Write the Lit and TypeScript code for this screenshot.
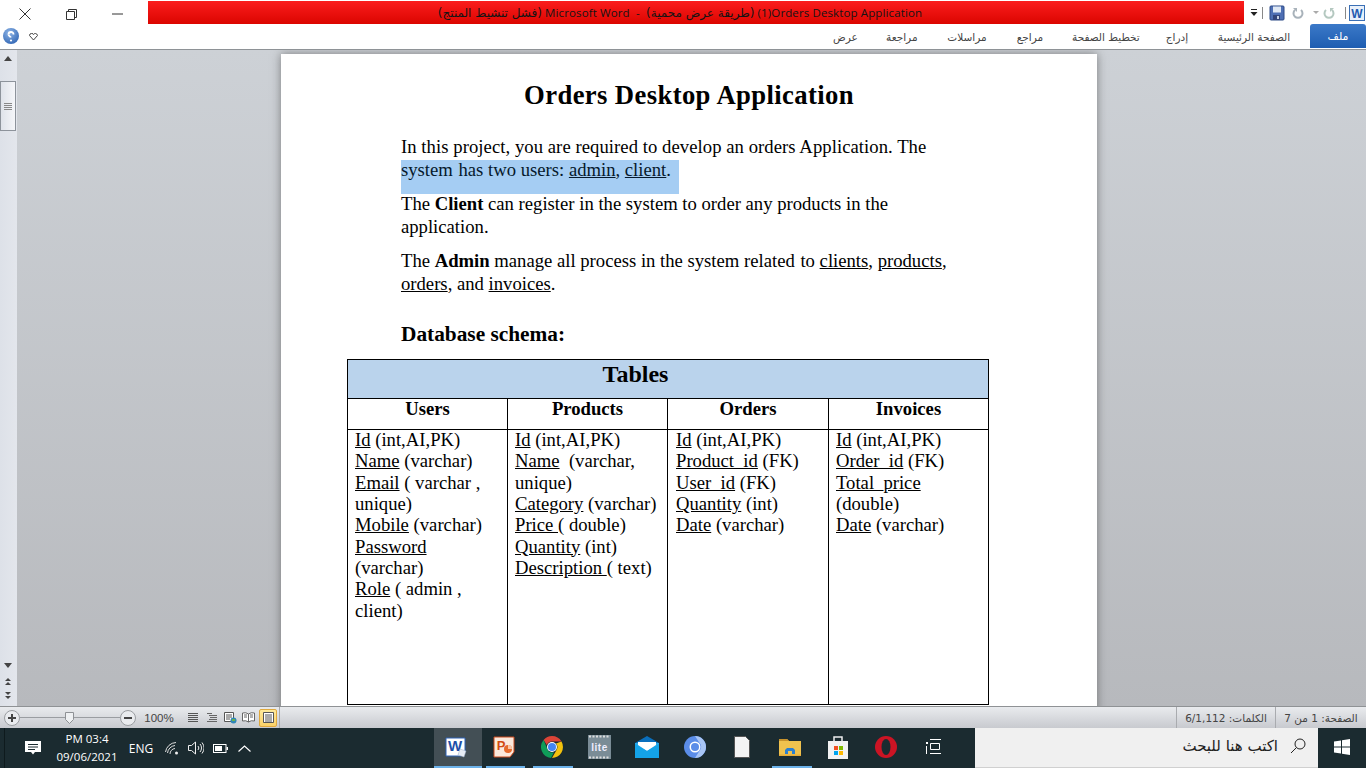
import { LitElement, html, css } from "lit";
import { customElement } from "lit/decorators.js";

const wordIcon = html`<svg width="22" height="22" viewBox="0 0 22 22"><path d="M1 2h19v14l-4 4H1z" fill="#fff" stroke="#2f62b5"/><text x="10" y="15" text-anchor="middle" font-family="Liberation Sans" font-weight="700" font-size="15" fill="#1d4fa8">W</text><path d="M15 13l6 2-2 6-6-2z" fill="#e8edf5" stroke="#9fb0c8" stroke-width=".5"/></svg>`;

@customElement("app-root")
export class AppRoot extends LitElement {
  static styles = css`
    :host { display: block; width: 1366px; height: 768px; overflow: hidden; background: #fff; font-family: "Liberation Sans", "DejaVu Sans", sans-serif; }
    .app { display: flex; flex-direction: column; height: 768px; }

    .titlebar { height: 24px; display: flex; align-items: flex-start; background: #fff; flex: none; }
    .winctl { width: 148px; height: 24px; display: flex; flex: none; }
    .winctl div { display: flex; align-items: center; justify-content: center; height: 28px; }
    .c1 { width: 50px; } .c2 { width: 42px; } .c3 { width: 50px; }
    .redbar { margin-top: 1px; width: 1096px; height: 23px; background: linear-gradient(#fb1d1d, #db0500); display: flex; align-items: center; justify-content: center; font-size: 12px; color: #141414; padding-right: 32px; box-sizing: border-box; white-space: pre; flex: none; }
    .redbar .lt { font-family: "Open Sans", sans-serif; font-size: 11.5px; letter-spacing: .12px; }
    .redbar .ar { font-family: "DejaVu Sans", sans-serif; font-size: 12px; }
    .qat { flex: 1; display: flex; align-items: center; height: 25px; padding-left: 6px; }
    .qat .sep { width: 1px; height: 12px; background: #888; flex: none; }
    .qat svg { flex: none; }
    .q-drop { margin-right: 3px; } .q-save { margin-left: 6px; } .q-undo { margin-left: 7px; } .q-arr { margin-left: 9px; } .q-redo { margin-left: 4px; } .q-sep2 { margin-left: 10px; } .q-word { margin-left: 3px; }

    .ribbon { height: 25px; flex: none; display: flex; align-items: stretch; background: #fff; border-bottom: 1px solid #8e9296; position: relative; }
    .rleft { display: flex; align-items: center; width: 44px; padding-left: 3px; gap: 10px; box-sizing: border-box; padding-top: 0; padding-bottom: 2px; }
    .heart { margin-top: 2px; }
    .tabs { flex: 1; display: flex; justify-content: flex-end; align-items: center; font-family: "DejaVu Sans", sans-serif; font-size: 10.5px; color: #444; padding-top: 1px; }
    .tabs span { display: block; white-space: nowrap; text-align: center; }
    .t1 { width: 24px; margin-right: 29px; } .t2 { width: 28px; margin-right: 32px; } .t3 { width: 42px; margin-right: 28px; } .t4 { width: 28px; margin-right: 28px; } .t5 { width: 66px; margin-right: 26px; } .t6 { width: 26px; margin-right: 26px; } .t7 { width: 76px; margin-right: 18px; }
    .file { width: 56px; height: 24px; background: linear-gradient(#3b79c8, #1e5db1); color: #fff; font-family: "DejaVu Sans", sans-serif; font-size: 11px; display: flex; align-items: center; justify-content: center; border-radius: 3px 3px 0 0; flex: none; padding-top: 1px; box-sizing: border-box; }

    .main { flex: 1; min-height: 0; display: flex; background: linear-gradient(#cdd1d6, #b7b9bd); overflow: hidden; }
    .sb { width: 17px; flex: none; background: linear-gradient(90deg, #dde1e8, #e3e6ec); display: flex; flex-direction: column; align-items: flex-start; }
    .arrow { width: 0; height: 0; border-left: 4px solid transparent; border-right: 4px solid transparent; margin-left: 4px; }
    .up { border-bottom: 5px solid #444; margin-top: 6px; }
    .thumb { width: 16px; height: 50px; margin-top: 20px; box-sizing: border-box; border: 1px solid #8d939b; background: linear-gradient(90deg, #dfe3ea, #f5f6f9); display: flex; flex-direction: column; gap: 1px; align-items: center; justify-content: center; }
    .thumb i { display: block; width: 8px; height: 1px; background: #888; }
    .sbspace { flex: 1; }
    .down { border-top: 5px solid #444; margin-bottom: 10px; }
    .dbl { display: flex; flex-direction: column; gap: 1px; align-items: center; margin-bottom: 7px; margin-left: 5px; width: 6px; }
    .dbl i { display: block; width: 0; height: 0; border-left: 3px solid transparent; border-right: 3px solid transparent; }
    .dbl .u { border-bottom: 3px solid #444; } .dbl .d { border-top: 3px solid #444; }

    .canvas { flex: 1; min-width: 0; padding: 4px 269px 0 264px; }
    .page { background: #fff; height: 700px; box-shadow: 0 0 9px rgba(80, 80, 80, .65); box-sizing: border-box; padding-top: 26px; font-family: "Liberation Serif", serif; color: #000; font-size: 18.67px; line-height: 23px; }
    .h1 { text-align: center; font-weight: 700; font-size: 26.67px; letter-spacing: .38px; line-height: 30px; margin-bottom: 25px; }
    .body { padding-left: 120px; }
    .line { white-space: pre; }
    .first { letter-spacing: .056px; }
    .gap { margin-left: 1px; }
    .sel { width: 278px; height: 34px; background: #a5cdf3; margin: 2px 0 -2px; color: #06192c; line-height: 20px; }
    .p2 { margin-top: 11px; }
    .h2 { font-weight: 700; font-size: 21.33px; margin-top: 27px; line-height: 24px; }
    .table { display: grid; grid-template-columns: 160px 160px 161px 159px; margin: 13px 0 0 66px; width: 642px; box-sizing: border-box; border: 1px solid #000; height: 346px; grid-template-rows: 39px 31px 1fr; }
    .th { grid-column: 1 / -1; background: #bad3ec; text-align: center; font-weight: 700; font-size: 24px; line-height: 28px; border-bottom: 1px solid #000; padding-right: 65px; box-sizing: border-box; }
    .hd { text-align: center; font-weight: 700; line-height: 20px; border-bottom: 1px solid #000; border-right: 1px solid #000; }
    .cell { margin-top: -1px; padding: 0 0 0 7px; line-height: 21.33px; border-right: 1px solid #000; }
    .c3col { padding-left: 8px; }
    .hd:nth-child(5), .cell:last-child { border-right: 0; }

    .status { height: 22px; flex: none; background: linear-gradient(#e9ebee, #c8cacf); border-top: 1px solid #8f9295; display: flex; align-items: center; box-sizing: border-box; color: #444; font-size: 11px; }
    .zoomgrp { display: flex; align-items: center; width: 280px; flex: none; padding-left: 4px; box-sizing: border-box; height: 100%; border-right: 1px solid #aaa; }
    .slider { position: relative; width: 100px; height: 16px; display: flex; align-items: center; flex: none; }
    .slider b { display: block; height: 1px; width: 100%; background: #9a9da1; }
    .knob { position: absolute; left: 45px; top: 2px; }
    .pct { width: 46px; text-align: center; flex: none; font-size: 11.5px; }
    .views { display: flex; align-items: center; gap: 2.5px; margin-left: 3px; }
    .vb { width: 16px; height: 16px; display: flex; align-items: center; justify-content: center; flex: none; }
    .vb.on { background: linear-gradient(#fde99b, #fbd268); border: 1px solid #e0a93e; border-radius: 2px; width: 18px; height: 18px; box-sizing: border-box; }
    .sgrow { flex: 1; }
    .stat { height: 100%; display: flex; align-items: center; border-left: 1px solid #a9abaf; font-family: "DejaVu Sans", sans-serif; font-size: 10.5px; white-space: nowrap; box-sizing: border-box; justify-content: center; }
    .s-words { width: 99px; } .s-page { width: 91px; }

    .taskbar { height: 40px; flex: none; background: #1b2b30; display: flex; align-items: stretch; color: #fff; }
    .tray { width: 434px; flex: none; display: flex; align-items: center; padding-left: 25px; box-sizing: border-box; background: linear-gradient(90deg, transparent 4px, #0e1a1d 4px, #0e1a1d 5px, transparent 5px); }
    .clock { width: 78px; margin-left: 7px; text-align: center; font-family: "Open Sans", "Liberation Sans", sans-serif; font-size: 11.5px; line-height: 18px; white-space: nowrap; }
    .eng { width: 34px; text-align: center; font-family: "Open Sans", sans-serif; font-size: 12px; margin-left: -2px; }
    .tricons { display: flex; align-items: center; gap: 9px; margin-left: 7px; }
    .chev { margin-left: 1px; }
    .apps { display: flex; width: 541px; flex: none; }
    .app-i { position: relative; width: 47.7px; display: flex; align-items: center; justify-content: center; padding: 0 3px 3px 0; box-sizing: border-box; flex: none; }
    .app-i.act { background: #434f55; }
    .ul { position: absolute; bottom: 0; height: 2px; left: 4px; right: 4px; background: #6cb2ea; }
    .act .ul { left: 0; right: 0; }
    .search { flex: 1; background: #f0f0f0; border-bottom: 1px solid #d0d0d0; display: flex; align-items: center; justify-content: flex-end; color: #222; font-family: "DejaVu Sans", sans-serif; font-size: 15px; gap: 12px; padding: 0 12px 3px 0; box-sizing: border-box; }
    .start { width: 48px; flex: none; display: flex; align-items: center; justify-content: center; padding-bottom: 2px; }
  `;

  private cell(lines: unknown[], cls = "") {
    return html`<div class="cell ${cls}">${lines.map((l) => html`<div class="line">${l}</div>`)}</div>`;
  }

  render() {
    return html`<div class="app">
      <div class="titlebar">
        <div class="winctl">
          <div class="c1"><svg width="12" height="12" viewBox="0 0 12 12"><path d="M.5.5l11 11M11.500.5l-11 11" stroke="#333" fill="none"/></svg></div>
          <div class="c2"><svg width="11" height="11" viewBox="0 0 11 11"><path d="M2.500 2.500V.5h8v8h-2M.5 2.500h8v8h-8z" stroke="#333" fill="none"/></svg></div>
          <div class="c3"><svg width="11" height="2" viewBox="0 0 11 2"><path d="M0 1h11" stroke="#333"/></svg></div>
        </div>
        <div class="redbar"><span class="ar" dir="rtl">(فشل تنشيط المنتج)</span><span class="lt"> Microsoft Word  -  </span><span class="ar" dir="rtl">(طريقة عرض محمية)</span><span class="lt"> (1)Orders Desktop Application</span></div>
        <div class="qat">
          <svg class="q-drop" width="9" height="10" viewBox="0 0 9 10"><path d="M1 1.500h6" stroke="#222"/><path d="M.5 4h7L4 8z" fill="#222"/></svg>
          <div class="sep"></div>
          <svg class="q-save" width="16" height="16" viewBox="0 0 16 16"><rect x="1" y="1" width="14" height="14" rx="1" fill="#4e6fb4" stroke="#2d4a86"/><rect x="4" y="1.500" width="8" height="6" fill="#dfe8f4"/><rect x="4" y="10" width="7" height="5" fill="#33457a"/><rect x="8" y="11" width="2" height="3" fill="#c5d0e3"/></svg>
          <svg class="q-undo" width="12" height="12" viewBox="0 0 12 12"><path d="M3 3a4.500 4.500 0 1 0 6 0" stroke="#a8b2ba" stroke-width="2" fill="none"/><path d="M1 1h4v4z" fill="#a8b2ba"/></svg>
          <svg class="q-arr" width="6" height="4" viewBox="0 0 6 4"><path d="M0 0h6L3 3z" fill="#aaa"/></svg>
          <svg class="q-redo" width="12" height="12" viewBox="0 0 12 12"><g transform="matrix(-1 0 0 1 12 0)"><path d="M3 3a4.500 4.500 0 1 0 6 0" stroke="#b4c8c0" stroke-width="2" fill="none"/><path d="M1 1h4v4z" fill="#b4c8c0"/></g></svg>
          <div class="sep q-sep2"></div>
          <svg class="q-word" width="16" height="16" viewBox="0 0 16 16"><rect x=".5" y=".5" width="15" height="15" fill="#e8f0fa" stroke="#3a6fb5"/><text x="8" y="13" text-anchor="middle" font-family="Liberation Sans" font-weight="700" font-size="12" fill="#1f5bb0">W</text></svg>
        </div>
      </div>

      <div class="ribbon">
        <div class="rleft">
          <svg width="16" height="16" viewBox="0 0 16 16"><defs><radialGradient id="hlp" cx=".4" cy=".3" r=".8"><stop offset="0" stop-color="#8db4e6"/><stop offset="1" stop-color="#2c62b2"/></radialGradient></defs><circle cx="8" cy="8" r="8" fill="url(#hlp)"/><path d="M10.500 6.500a2.500 2.500 0 1 0 -5 0" stroke="#fff" stroke-width="1.800" fill="none"/><path d="M5.500 6.500c0 1.500 2 2 2.300 3" stroke="#fff" stroke-width="1.800" fill="none"/><circle cx="8" cy="12.500" r="1.100" fill="#fff"/></svg>
          <svg class="heart" width="9" height="8" viewBox="0 0 9 8"><path d="M.5 2.500Q.5.500 2.500.500T4.500 1.500Q5 .5 6.500.5t2 2L4.500 7z" fill="none" stroke="#444"/></svg>
        </div>
        <div class="tabs">
          <span class="t1">عرض</span><span class="t2">مراجعة</span><span class="t3">مراسلات</span><span class="t4">مراجع</span><span class="t5">تخطيط الصفحة</span><span class="t6">إدراج</span><span class="t7">الصفحة الرئيسية</span>
        </div>
        <div class="file">ملف</div>
      </div>

      <div class="main">
        <div class="sb">
          <div class="arrow up"></div>
          <div class="thumb"><i></i><i></i><i></i><i></i></div>
          <div class="sbspace"></div>
          <div class="arrow down"></div>
          <div class="dbl"><i class="u"></i><i class="u"></i></div>
          <div class="dbl"><i class="d"></i><i class="d"></i></div>
        </div>
        <div class="canvas">
          <div class="page">
            <div class="h1">Orders Desktop Application</div>
            <div class="body">
              <div class="line first">In this project, you are required to develop an orders Application. The</div>
              <div class="sel"><div class="line">system <span class="gap"></span>has two users: <u>admin</u>, <u>client</u>.</div></div>
              <div class="line">The <b>Client</b> can register in the system to order any products in the</div>
              <div class="line">application.</div>
              <div class="line p2">The <b>Admin</b> manage all process in the system related <span class="gap"></span>to <u>clients</u>, <u>products</u>,</div>
              <div class="line"><u>orders</u>, and <u>invoices</u>.</div>
              <div class="line h2">Database schema:</div>
            </div>
            <div class="table">
              <div class="th">Tables</div>
              <div class="hd">Users</div><div class="hd">Products</div><div class="hd">Orders</div><div class="hd">Invoices</div>
              ${this.cell([
                html`<u>Id</u> (int,AI,PK)`, html`<u>Name</u> (varchar)`, html`<u>Email</u> ( varchar ,`, html`unique)`,
                html`<u>Mobile</u> (varchar)`, html`<u>Password</u>`, html`(varchar)`, html`<u>Role</u> ( admin ,`, html`client)`,
              ])}
              ${this.cell([
                html`<u>Id</u> (int,AI,PK)`, html`<u>Name</u>  (varchar,`, html`unique)`, html`<u>Category</u> (varchar)`,
                html`<u>Price </u>( double)`, html`<u>Quantity</u> (int)`, html`<u>Description </u>( text)`,
              ])}
              ${this.cell([
                html`<u>Id</u> (int,AI,PK)`, html`<u>Product_id</u> (FK)`, html`<u>User_id</u> (FK)`, html`<u>Quantity</u> (int)`, html`<u>Date</u> (varchar)`,
              ], "c3col")}
              ${this.cell([
                html`<u>Id</u> (int,AI,PK)`, html`<u>Order_id</u> (FK)`, html`<u>Total_price</u>`, html`(double)`, html`<u>Date</u> (varchar)`,
              ])}
            </div>
          </div>
        </div>
      </div>

      <div class="status">
        <div class="zoomgrp">
          <svg width="16" height="16" viewBox="0 0 16 16"><circle cx="8" cy="8" r="7.500" fill="#e9ebee" stroke="#9a9da1"/><path d="M4 8h8M8 4v8" stroke="#444" stroke-width="2"/></svg>
          <div class="slider"><b></b><svg class="knob" width="10" height="12" viewBox="0 0 10 12"><path d="M.5.5h8v7l-4 4-4-4z" fill="#eef0f2" stroke="#8e9195"/></svg></div>
          <svg width="16" height="16" viewBox="0 0 16 16"><circle cx="8" cy="8" r="7.500" fill="#e9ebee" stroke="#9a9da1"/><path d="M4 8h8" stroke="#444" stroke-width="2"/></svg>
          <div class="pct">100%</div>
          <div class="views">
            <div class="vb"><svg width="10" height="9" viewBox="0 0 10 9"><path d="M0 .5h10M0 2.500h10M0 4.500h10M0 6.500h10M0 8.500h10" stroke="#555"/></svg></div>
            <div class="vb"><svg width="10" height="9" viewBox="0 0 10 9"><path d="M0 .5h5M2 2.500h8M3 4.500h7M2 6.500h8M0 8.500h10" stroke="#666"/></svg></div>
            <div class="vb"><svg width="13" height="12" viewBox="0 0 13 12"><path d="M.5.500h9v9h-9zM2 3h6M2 5h6M2 7h4" stroke="#555" fill="#fff"/><circle cx="9.500" cy="8.500" r="3" fill="#2e86b8"/><path d="M8 8h3" stroke="#6cb04e" stroke-width="2"/></svg></div>
            <div class="vb"><svg width="13" height="11" viewBox="0 0 13 11"><path d="M6.500 2Q4 0 .5 1v8Q4 8 6.500 10 9 8 12.500 9V1Q9 0 6.500 2zM6.500 2v8M2 3h3M2 5h3M8 3h3M8 5h3" stroke="#666" fill="#fff"/></svg></div>
            <div class="vb on"><svg width="11" height="11" viewBox="0 0 11 11"><path d="M.5.500h10v10H.5z" fill="#fff" stroke="#555"/><path d="M2 3h7M2 5h7M2 7h7M2 9h7" stroke="#555"/></svg></div>
          </div>
        </div>
        <div class="sgrow"></div>
        <div class="stat s-words"><span dir="rtl">الكلمات: 6/1,112</span></div>
        <div class="stat s-page"><span dir="rtl">الصفحة: 1 من 7</span></div>
      </div>

      <div class="taskbar">
        <div class="tray">
          <svg width="16" height="16" viewBox="0 0 16 16"><path d="M0 1h16v11H10l-2 2.500L6 12H0z" fill="#fff"/><path d="M3 4.500h10M3 7h10M3 9.500h7" stroke="#1b2b30"/></svg>
          <div class="clock"><div>PM 03:4</div><div>09/06/2021</div></div>
          <div class="eng">ENG</div>
          <div class="tricons">
            <svg width="14" height="14" viewBox="0 0 14 14" fill="none" stroke="#ddd"><path d="M.5 11A11 11 0 0 1 11 1.500M2.500 12A8.500 8.500 0 0 1 10 4.500M5 13a5.500 5.500 0 0 1 5-5.500"/><circle cx="11.500" cy="12" r="1.500" fill="#eee" stroke="none"/></svg>
            <svg width="16" height="14" viewBox="0 0 16 14" fill="none" stroke="#eee"><path d="M.5 4.500h3l4-3.500v12l-4-3.500h-3z"/><path d="M10 5a3 3 0 0 1 0 4M12 3a6 6 0 0 1 0 8M14 1.500a9 9 0 0 1 0 11"/></svg>
            <svg width="15" height="9" viewBox="0 0 15 9"><rect x=".5" y=".5" width="12.500" height="8" fill="none" stroke="#fff"/><rect x="2" y="2" width="7" height="5" fill="#fff"/><rect x="13.500" y="3" width="1.500" height="3" fill="#fff"/></svg>
            <svg class="chev" width="13" height="7" viewBox="0 0 13 7"><path d="M.5 6.500l6-5.500 6 5.500" stroke="#fff" fill="none" stroke-width="1.200"/></svg>
          </div>
        </div>
        <div class="apps">
          <div class="app-i act">${wordIcon}<div class="ul"></div></div>
          <div class="app-i"><svg width="22" height="22" viewBox="0 0 22 22"><path d="M1 1h20v15l-4 5H1z" fill="#fbe9dc" stroke="#c8491b"/><text x="8" y="14" text-anchor="middle" font-family="Liberation Sans" font-weight="700" font-size="13" fill="#d24a10">P</text><circle cx="15" cy="13" r="4" fill="#e66a2c"/><path d="M15 13V9a4 4 0 0 1 4 4z" fill="#f9c9a9"/></svg><div class="ul"></div></div>
          <div class="app-i"><svg width="22" height="22" viewBox="0 0 22 22"><path d="M11 0a11 11 0 0 1 9.500 5.500H11a5.500 5.500 0 0 0-5.200 3.600L2.600 4A11 11 0 0 1 11 0z" fill="#db4437"/><path d="M20.500 5.500A11 11 0 0 1 11 22l4.700-8.200A5.500 5.500 0 0 0 15 7.500z" fill="#f4c20d"/><path d="M2.600 4L7.200 15A5.500 5.500 0 0 0 13 16.200L10 22A11 11 0 0 1 2.600 4z" fill="#0f9d58"/><circle cx="11" cy="11" r="5" fill="#fff"/><circle cx="11" cy="11" r="4" fill="#4285f4"/></svg><div class="ul"></div></div>
          <div class="app-i"><svg width="23" height="24" viewBox="0 0 23 24"><rect width="23" height="24" fill="#7a8c96"/><path d="M1 1.500h21M1 22.500h21" stroke="#ddd" stroke-width="2" stroke-dasharray="2 1.500"/><text x="11.500" y="16" text-anchor="middle" font-family="Liberation Sans" font-weight="700" font-size="10" letter-spacing=".5" fill="#eef">lite</text></svg></div>
          <div class="app-i"><svg width="24" height="22" viewBox="0 0 24 22"><path d="M12 0l12 7v15H0V7z" fill="#0a6fbd"/><path d="M0 7h24v15H0z" fill="#28a8ea"/><path d="M3 6h18v3l-9 6-9-6z" fill="#fff"/><path d="M0 22V8l12 7 12-7v14z" fill="#14a3e8"/></svg></div>
          <div class="app-i"><svg width="22" height="22" viewBox="0 0 22 22"><circle cx="11" cy="11" r="11" fill="#5b8de8"/><path d="M11 0a11 11 0 0 1 0 22l5-8a5 5 0 0 0-.5-7z" fill="#a8c5f5"/><circle cx="11" cy="11" r="5.500" fill="#fff"/><circle cx="11" cy="11" r="4" fill="#5b8de8"/></svg></div>
          <div class="app-i"><svg width="16" height="22" viewBox="0 0 16 22"><path d="M.5.500h11l4 4v17H.5z" fill="#f4f4f4" stroke="#555"/></svg></div>
          <div class="app-i"><svg width="22" height="18" viewBox="0 0 22 18"><path d="M0 1h8l2 2h12v15H0z" fill="#f0c24e"/><path d="M0 1h8l2 2H0z" fill="#c8932c"/><path d="M6 16v-4l2-2h6l2 2v4h-3v-3H9v3z" fill="#2b7fcf"/><rect x="0" y="16.500" width="22" height="1.500" fill="#e5ac3a"/></svg><div class="ul"></div></div>
          <div class="app-i"><svg width="22" height="24" viewBox="0 0 22 24"><path d="M1 6h20v18H1z" fill="#f2f2f2"/><path d="M7 7V2h8v5" fill="none" stroke="#eee" stroke-width="1.500"/><rect x="7" y="11" width="4" height="4" fill="#f25022"/><rect x="12" y="11" width="4" height="4" fill="#7fba00"/><rect x="7" y="16" width="4" height="4" fill="#00a4ef"/><rect x="12" y="16" width="4" height="4" fill="#ffb900"/></svg></div>
          <div class="app-i"><svg width="22" height="22" viewBox="0 0 22 22"><ellipse cx="11" cy="11" rx="11" ry="11" fill="#cc1424"/><ellipse cx="11" cy="11" rx="4.500" ry="8" fill="#1b2b30"/></svg></div>
          <div class="app-i"><svg width="15" height="15" viewBox="0 0 15 15" fill="none" stroke="#fff"><path d="M4 .5h11M4 14.500h11M4.500 4.500h9v6h-9z"/><rect x="0" y="3" width="2" height="2" fill="#fff" stroke="none"/><path d="M.5 7v8"/></svg></div>
        </div>
        <div class="search"><span dir="rtl">اكتب هنا للبحث</span><svg width="16" height="16" viewBox="0 0 16 16" fill="none" stroke="#222"><circle cx="10" cy="6" r="5"/><path d="M6.500 9.500L1 15"/></svg></div>
        <div class="start"><svg width="16" height="16" viewBox="0 0 16 16" fill="#fff"><path d="M0 2.500l7-1v6H0zM8 1.300l8-1.200v7.400H8zM0 8.500h7v6l-7-1zM8 8.500h8v7.400l-8-1.200z"/></svg></div>
      </div>
    </div>`;
  }
}
